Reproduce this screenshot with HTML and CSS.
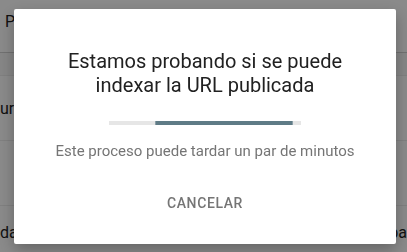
FILE: index.html
```html
<!DOCTYPE html>
<html lang="es">
<head>
  <meta charset="UTF-8" />
  <meta name="viewport" content="width=device-width, initial-scale=1.0"/>
  <title>Inspección de URL</title>
  <link rel="stylesheet" href="styles.css">
</head>
<body>
  <main class="page">
    <div class="page-header">Pa</div>
    <div class="page-tabs"></div>
    <div class="page-row"><span>uración</span><span></span></div>
    <div class="page-row"><span></span><span></span></div>
    <div class="page-row last"><span>da</span><span>pa</span></div>
  </main>

  <div class="overlay"></div>

  <div class="dialog" role="dialog">
    <h2 class="dialog-title">Estamos probando si se puede<br>indexar la URL publicada</h2>
    <div class="progress-track">
      <div class="progress-fill" style="margin-left: 24%; width: 72%;"></div>
    </div>
    <p class="dialog-text">Este proceso puede tardar un par de minutos</p>
    <button class="btn">Cancelar</button>
  </div>
</body>
</html>
```

FILE: styles.css
```css
html, body {
  margin: 0;
  height: 100%;
  font-family: Roboto, "Liberation Sans", Arial, sans-serif;
  background-color: #fff;
  overflow: hidden;
}

/* Page behind the dialog */
.page {
  color: #212121;
  font-size: 16px;
}

.page-header {
  height: 52px;
  padding-left: 5px;
  line-height: 44px;
  font-size: 16px;
  border-bottom: 1px solid #d0d0d0;
}

.page-tabs {
  height: 22px;
  background-color: #f7f7f7;
  border-bottom: 1px solid #ececec;
}

.page-row {
  height: 64px;
  display: flex;
  justify-content: space-between;
  align-items: center;
  border-bottom: 1px solid #ececec;
}

.page-row.last {
  height: 46px;
  align-items: flex-end;
  box-sizing: border-box;
  padding-bottom: 10px;
  border-bottom: none;
}

/* Scrim */
.overlay {
  position: fixed;
  inset: 0;
  background-color: rgba(0, 0, 0, 0.46);
}

/* Dialog */
.dialog {
  position: fixed;
  left: 14px;
  top: 9px;
  width: 382px;
  height: 235px;
  box-sizing: border-box;
  padding-top: 40px;
  background-color: #fff;
  border-radius: 2px;
  box-shadow: 0 6px 16px rgba(0, 0, 0, 0.28);
  text-align: center;
  display: flex;
  flex-direction: column;
  align-items: center;
}

.dialog-title {
  margin: 0;
  font-size: 20px;
  line-height: 24px;
  font-weight: 400;
  color: #212121;
}

.progress-track {
  width: 192px;
  height: 4px;
  margin-top: 24px;
  background-color: #e6e6e6;
  display: flex;
}

.progress-fill {
  height: 100%;
  background-color: #5f7b86;
  border-left: 1px solid #8a9ea6;
  border-right: 1px solid #8a9ea6;
  box-sizing: border-box;
}

.dialog-text {
  margin: 16px 0 0;
  font-size: 15px;
  line-height: 20px;
  color: #757575;
}

.btn {
  margin-top: 24px;
  padding: 8px 12px;
  border: none;
  background: none;
  font-family: inherit;
  font-size: 14px;
  line-height: 20px;
  font-weight: 500;
  letter-spacing: 0.6px;
  text-transform: uppercase;
  color: #757575;
  cursor: pointer;
}
```
